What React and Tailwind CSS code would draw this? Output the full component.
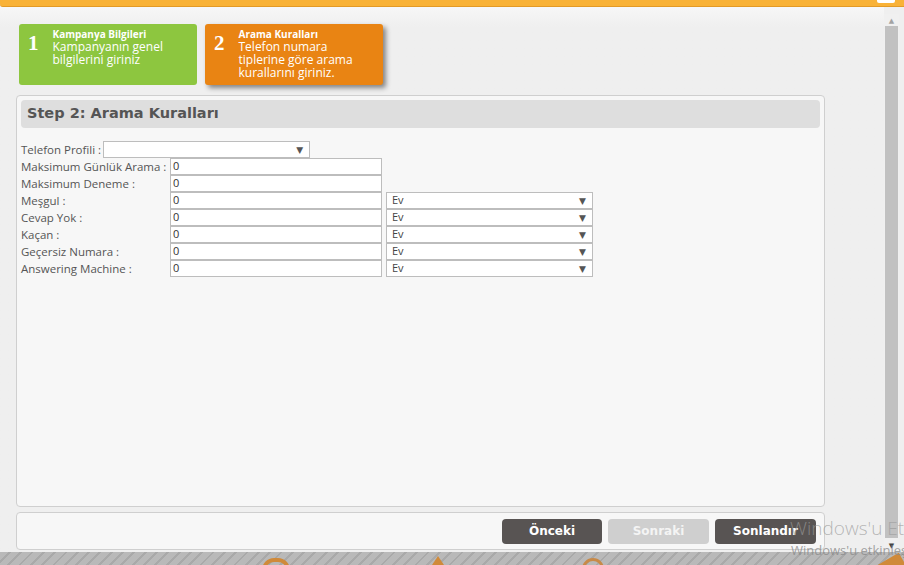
import React from 'react';

const font = { fontFamily: '"Open Sans", "DejaVu Sans", sans-serif' };

const rows = [
  { label: 'Meşgul :', value: '0' },
  { label: 'Cevap Yok :', value: '0' },
  { label: 'Kaçan :', value: '0' },
  { label: 'Geçersiz Numara :', value: '0' },
  { label: 'Answering Machine :', value: '0' },
];

function Caret() {
  return <span className="text-[9px] leading-none text-[#555]">▼</span>;
}

function FakeSelect({ value, width }) {
  return (
    <div
      className={`flex h-[17px] items-center justify-between border border-[#bdbdbd] bg-white pl-[5px] pr-[6px] text-[11px] text-[#444] ${width}`}
    >
      <span>{value}</span>
      <Caret />
    </div>
  );
}

function TextBox({ value }) {
  return (
    <div className="flex h-[17px] w-[212px] items-center border border-[#bdbdbd] bg-white pl-[2px] text-[11px] text-[#333]">
      {value}
    </div>
  );
}

function StepCard({ num, title, text, active }) {
  return (
    <div
      className={`flex h-[61px] w-[178px] gap-[14px] rounded-[3px] px-[9px] pt-[3px] text-white ${
        active ? 'bg-[#e98413] shadow-[3px_3px_5px_rgba(0,0,0,0.45)]' : 'bg-[#8dc63f]'
      }`}
    >
      <div
        className="pt-[4px] text-[21px] font-bold leading-[24px]"
        style={{ fontFamily: '"Liberation Serif", serif' }}
      >
        {num}
      </div>
      <div className="pt-[1px]">
        <div className="text-[10px] font-bold leading-[12px]">{title}</div>
        <div className="text-[12px] leading-[13px]">{text}</div>
      </div>
    </div>
  );
}

export default function App() {
  return (
    <div
      className="relative flex h-[565px] w-[904px] flex-col overflow-hidden bg-[#efefef]"
      style={font}
    >
      {/* top window bar */}
      <div className="relative h-[7px] shrink-0 rounded-bl-[3px] border-b border-[#e39a26] bg-[#f9b237]">
        <div className="absolute right-[9px] top-0 h-[3px] w-[18px] rounded-b-[2px] bg-white" />
      </div>

      <div className="flex min-h-0 flex-1">
        {/* page content */}
        <div className="flex flex-1 flex-col bg-gradient-to-b from-[#f7f7f7] to-[#efefef] to-[20px] pl-[16px] pr-[59px]">
          <div className="flex gap-[8px] pl-[3px] pt-[17px]">
            <StepCard
              num="1"
              title="Kampanya Bilgileri"
              text={
                <>
                  Kampanyanın genel
                  <br />
                  bilgilerini giriniz
                </>
              }
            />
            <StepCard
              num="2"
              active
              title="Arama Kuralları"
              text={
                <>
                  Telefon numara
                  <br />
                  tiplerine göre arama
                  <br />
                  kurallarını giriniz.
                </>
              }
            />
          </div>

          {/* step panel */}
          <div className="mt-[10px] h-[414px] rounded-[4px] border border-[#cfcfcf] bg-[#f7f7f7] p-[4px]">
            <div
              className="flex h-[28px] items-center rounded-[4px] bg-[#dedede] pl-[6px] text-[14.5px] font-bold text-[#555]"
              style={{ fontFamily: '"DejaVu Sans", Verdana, sans-serif' }}
            >
              Step 2: Arama Kuralları
            </div>

            <div className="pt-[13px] text-[11.5px] text-[#555]">
              <div className="flex h-[17px] items-center">
                <span className="mr-[2px]">Telefon Profili :</span>
                <FakeSelect value="" width="w-[207px]" />
              </div>
              <div className="grid grid-cols-[145px_212px_207px] gap-x-[4px]">
                <div className="flex h-[17px] items-center whitespace-nowrap">Maksimum Günlük Arama :</div>
                <TextBox value="0" />
                <div />
                <div className="flex h-[17px] items-center">Maksimum Deneme :</div>
                <TextBox value="0" />
                <div />
                {rows.map((r) => (
                  <React.Fragment key={r.label}>
                    <div className="flex h-[17px] items-center">{r.label}</div>
                    <TextBox value={r.value} />
                    <FakeSelect value="Ev" width="w-[207px]" />
                  </React.Fragment>
                ))}
              </div>
            </div>
          </div>

          {/* wizard buttons */}
          <div
            className="mt-[5px] flex h-[38px] items-center justify-end gap-[6px] rounded-[4px] border border-[#cfcfcf] bg-[#f7f7f7] pr-[8px]"
            style={{ fontFamily: '"DejaVu Sans", sans-serif' }}
          >
            <button className="h-[25px] w-[100px] rounded-[4px] bg-[#585453] text-[12px] font-bold text-white">
              Önceki
            </button>
            <button className="h-[25px] w-[101px] rounded-[4px] bg-[#cfcfcf] text-[12px] font-bold text-[#f4f4f4]">
              Sonraki
            </button>
            <button className="h-[25px] w-[101px] rounded-[4px] bg-[#585453] text-[12px] font-bold text-white">
              Sonlandır
            </button>
          </div>
        </div>

        {/* scrollbar */}
        <div className="mr-[5px] mt-[7px] flex w-[15px] flex-col items-center bg-[#f0f0f0]">
          <span className="h-[11px] pt-[3px] text-[7px] leading-none text-[#a3a3a3]">▲</span>
          <div className="mt-[1px] h-[512px] w-[13px] bg-[#c1c1c1]" />
          <span className="mt-[4px] text-[7px] leading-none text-[#444]">▼</span>
        </div>
      </div>

      {/* striped desktop strip */}
      <div className="relative mt-[2px] h-[13px] shrink-0 overflow-hidden bg-[repeating-linear-gradient(135deg,#b9b9b9_0px,#b9b9b9_6px,#a9a9a9_6px,#a9a9a9_8px)]">
        <div className="absolute left-[262px] top-[6px] h-[24px] w-[28px] rounded-full border-[4px] border-[#d08a3a]" />
        <div className="absolute left-[430px] top-[4px] h-0 w-0 border-x-[8px] border-b-[12px] border-x-transparent border-b-[#d08a3a]" />
        <div className="absolute left-[582px] top-[6px] h-[24px] w-[22px] rounded-full border-[3px] border-[#c88a48]" />
        <div className="absolute left-[872px] top-[8px] h-[20px] w-[34px] rotate-[-30deg] bg-[#d08a3a]" />
      </div>

      {/* activation watermark */}
      <div
        className="pointer-events-none absolute left-[790px] top-[519px] whitespace-nowrap text-[19px] font-light leading-none text-[#9a9a9a]/70"
        style={{ fontFamily: '"Open Sans", sans-serif' }}
      >
        Windows'u Etkinleştir
      </div>
      <div
        className="pointer-events-none absolute left-[791px] top-[544px] whitespace-nowrap text-[13px] leading-none text-[#8a8a8a]/80"
        style={{ fontFamily: '"Open Sans", sans-serif' }}
      >
        Windows'u etkinleştirmek için Ayarlar'a gidin.
      </div>
    </div>
  );
}
